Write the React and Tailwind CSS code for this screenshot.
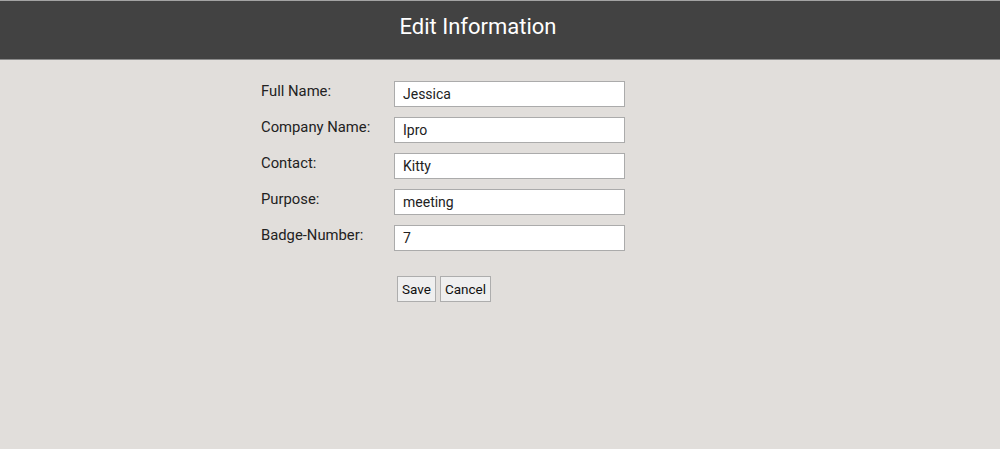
const fields = [
  { label: 'Full Name:', value: 'Jessica' },
  { label: 'Company Name:', value: 'Ipro' },
  { label: 'Contact:', value: 'Kitty' },
  { label: 'Purpose:', value: 'meeting' },
  { label: 'Badge-Number:', value: '7' },
];

export default function App() {
  return (
    <div className="min-h-[449px] bg-[#e1dedb] font-['Roboto',sans-serif] text-[#222]">
      <header className="h-[60px] bg-[#424242] border-t border-b border-t-[#a3a3a3] border-b-[#8a8a8a] flex items-center justify-center">
        <h1 className="text-[22px] text-white leading-none pb-[7px] pr-[44px]">Edit Information</h1>
      </header>

      <div className="pl-[261px] pt-[21px]">
        <div className="flex flex-col gap-[10px]">
          {fields.map((f) => (
            <div key={f.label} className="flex items-start">
              <label className="w-[133px] text-[14.8px] leading-[18px] pt-[1px]">{f.label}</label>
              <input
                defaultValue={f.value}
                className="w-[231px] h-[26px] bg-white border border-[#ababab] px-[8px] text-[14px] text-[#222] outline-none"
              />
            </div>
          ))}
        </div>

        <div className="pl-[136px] pt-[25px] flex gap-[4px]">
          <button className="h-[26px] px-[4px] bg-[#efefef] border border-[#adadad] text-[13.5px] text-[#111]">Save</button>
          <button className="h-[26px] px-[4px] bg-[#efefef] border border-[#adadad] text-[13.5px] text-[#111]">Cancel</button>
        </div>
      </div>
    </div>
  );
}
